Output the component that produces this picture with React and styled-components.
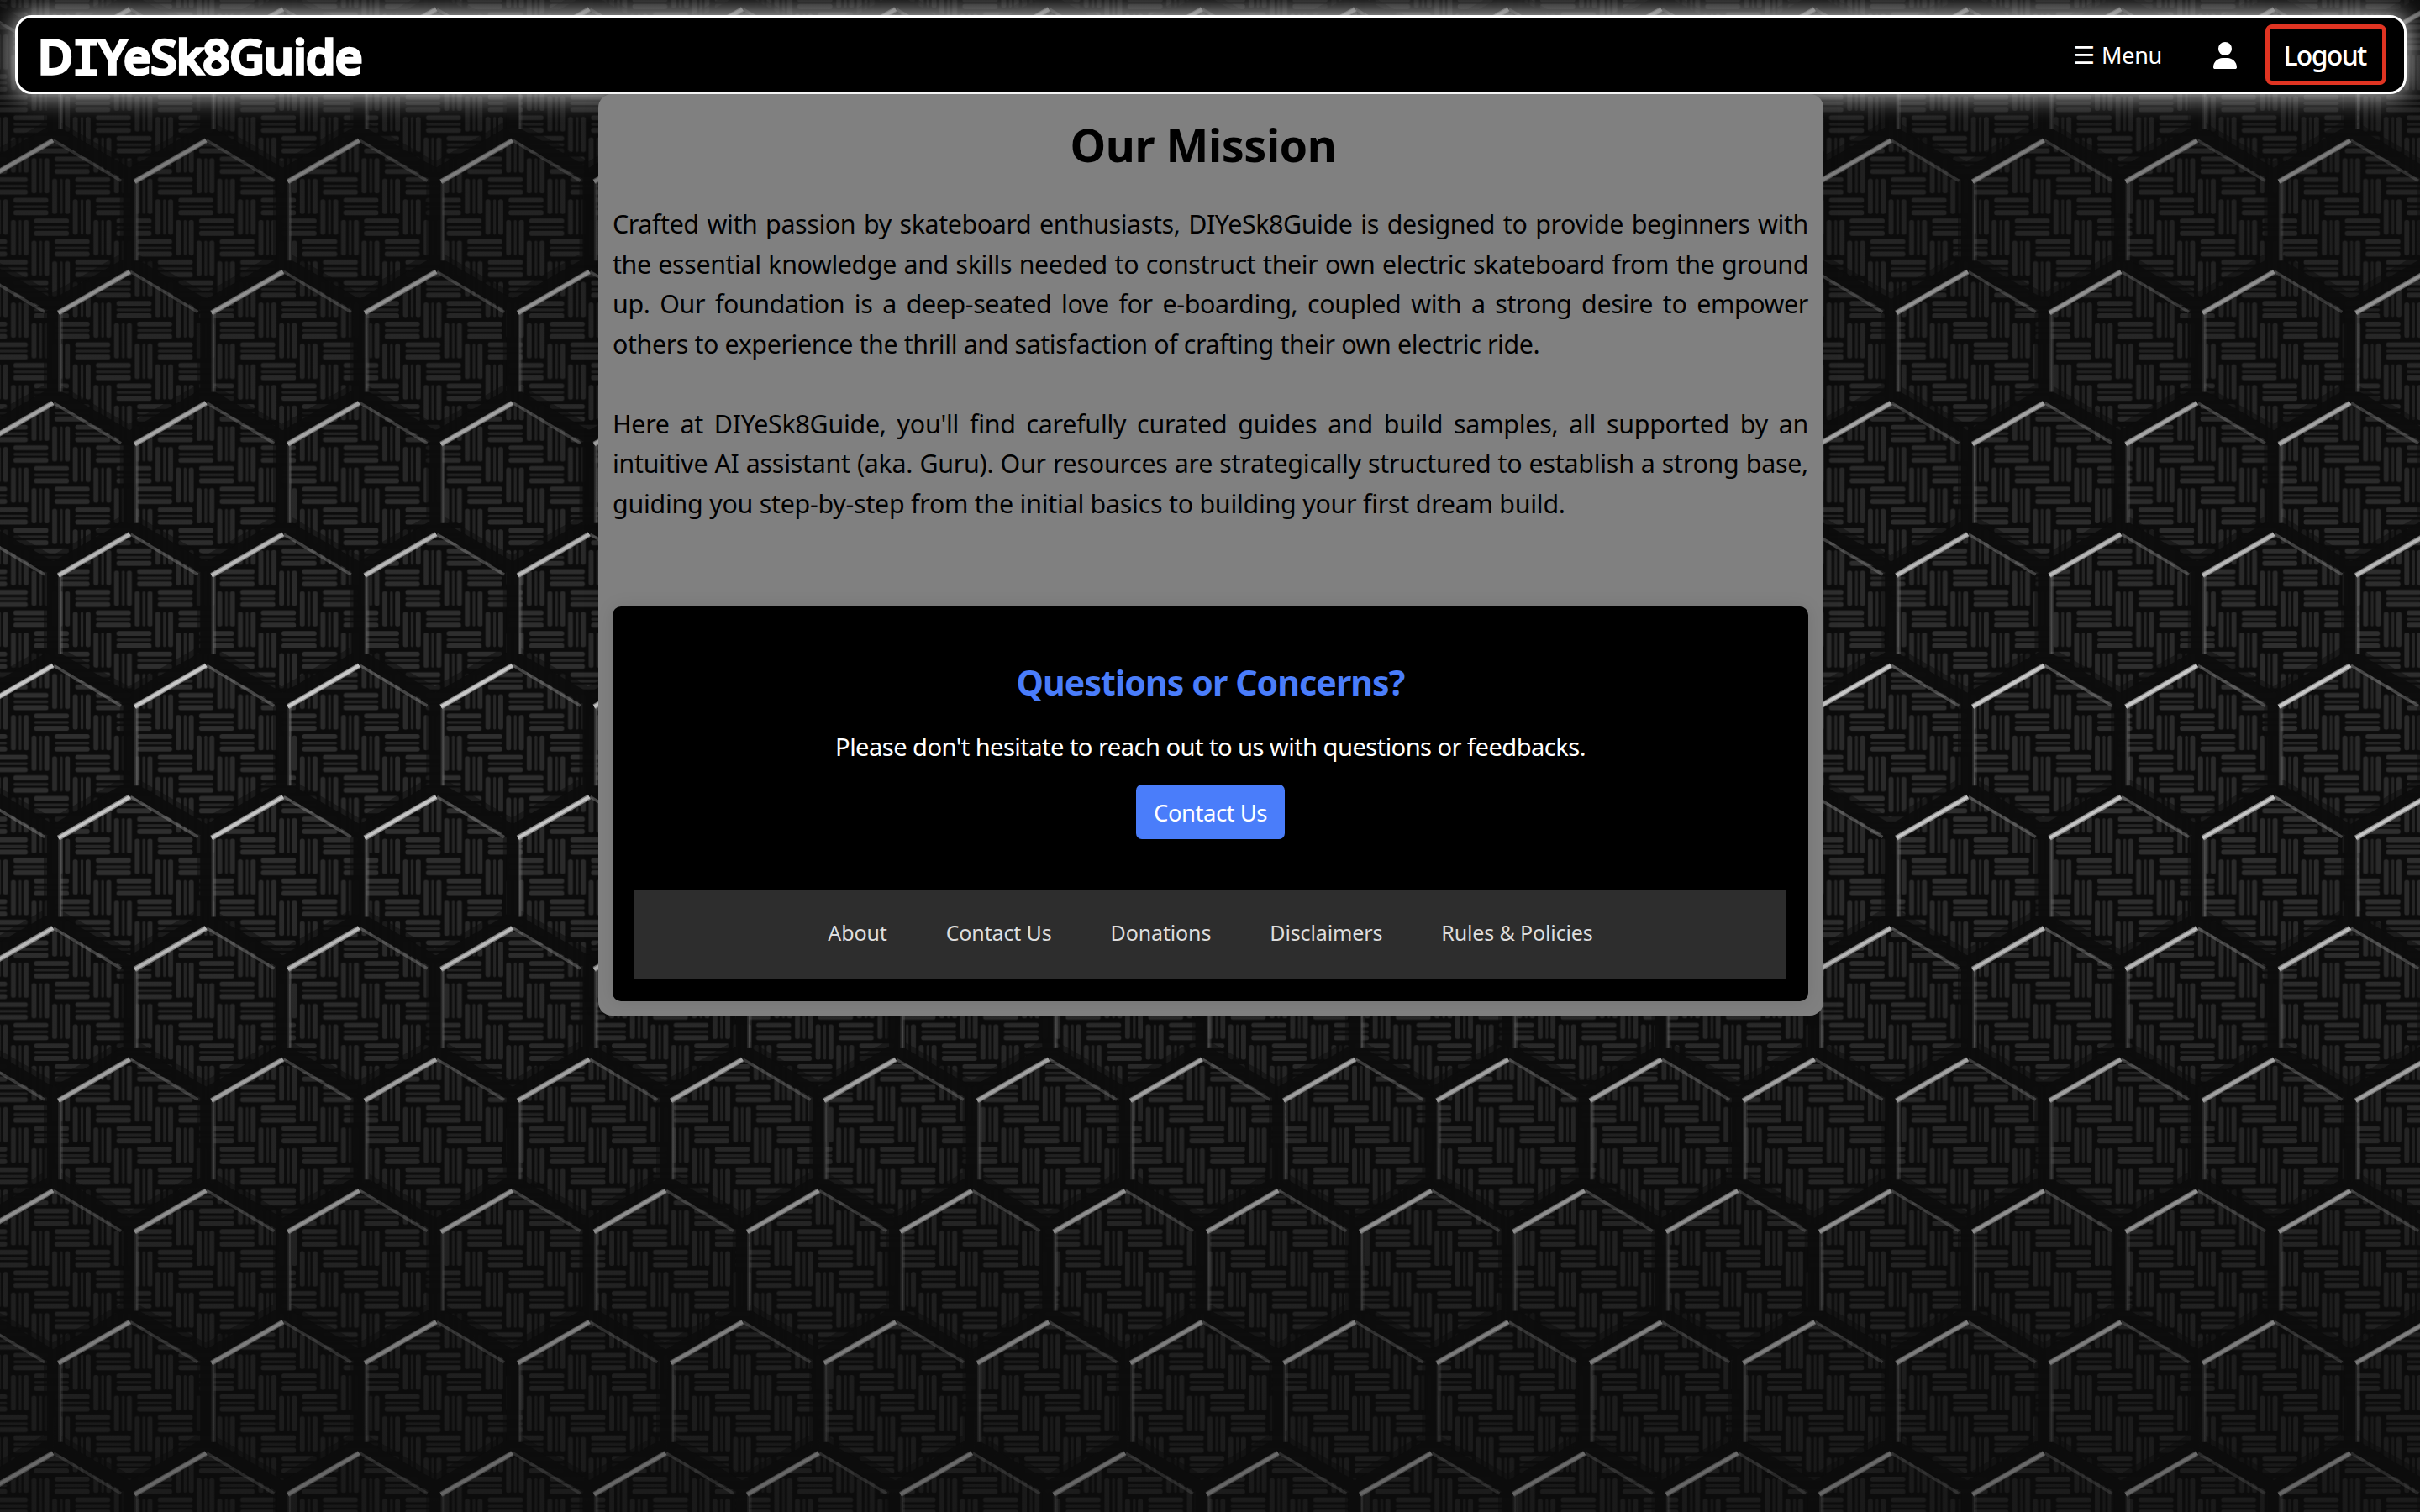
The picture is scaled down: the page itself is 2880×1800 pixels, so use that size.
import React from 'react';
import styled, { createGlobalStyle } from 'styled-components';
import { FaUser } from 'react-icons/fa6';

const uiFont = '"Noto Sans", "Open Sans", sans-serif';

const GlobalStyle = createGlobalStyle`
  *, *::before, *::after { box-sizing: border-box; }
  body { margin: 0; background: #0c0c0c; font-family: ${uiFont}; }
`;

const Page = styled.div`
  min-height: 1800px;
  padding-top: 18px;
  overflow: hidden;
  isolation: isolate;
  position: relative;
`;

const Backdrop = styled.svg`
  position: absolute;
  inset: 0;
  z-index: -1;
  display: block;
`;

const Header = styled.header`
  display: flex;
  align-items: center;
  justify-content: space-between;
  height: 94px;
  margin: 0 16px 0 18px;
  padding: 0 21px 0 24px;
  background: #000;
  border: 3px solid #fff;
  border-radius: 20px;
  box-shadow: 0 0 30px rgba(255, 255, 255, 0.85);
  color: #fff;
`;

const Logo = styled.a`
  padding-top: 4px;
  font-size: 57px;
  font-weight: 500;
  line-height: 70px;
  letter-spacing: -0.6px;
  -webkit-text-stroke: 3.6px #fff;
  stroke-linejoin: round;
`;

const SerifCap = styled.span`
  font-family: "DejaVu Sans Mono", monospace;
  font-size: 55px;
  letter-spacing: -2px;
`;

const Nav = styled.nav`
  display: flex;
  align-items: center;
`;

const MenuButton = styled.a`
  display: flex;
  align-items: center;
  gap: 8px;
  margin-right: 59px;
  padding-top: 2px;
  font-size: 27px;
  line-height: 36px;
  letter-spacing: -0.3px;
`;

const MenuGlyph = styled.span`
  font-family: "DejaVu Sans", sans-serif;
  font-size: 29px;
  line-height: 36px;
`;

const UserIcon = styled(FaUser)`
  display: block;
  width: 32px;
  height: 32px;
  margin: 2px 32px 0 0;
`;

const LogoutButton = styled.button`
  width: 144px;
  height: 72px;
  padding: 2px 3px 0 0;
  background: #000;
  border: 5px solid #e03422;
  border-radius: 8px;
  color: #fff;
  font: 500 32px/44px ${uiFont};
  letter-spacing: -1.7px;
`;

const Card = styled.main`
  width: 1458px;
  height: 1097px;
  margin-left: 712px;
  padding: 28px 18px 17px 17px;
  background: #808080;
  border-radius: 16px;
  box-shadow: 0 0 20px rgba(0, 0, 0, 0.1);
  color: #000;
`;

const Title = styled.h1`
  margin: 0 17px 39px 0;
  font-size: 54px;
  font-weight: 700;
  line-height: 64px;
  letter-spacing: -0.5px;
  text-align: center;
`;

const Copy = styled.p`
  margin: 0 0 47.5px;
  font-size: 30.4px;
  line-height: 47.5px;
  letter-spacing: ${({ $tracking }) => $tracking};
  text-align: justify;
`;

const Contact = styled.section`
  display: flex;
  flex-direction: column;
  align-items: center;
  height: 470px;
  margin-top: 99px;
  padding: 62px 26px 26px;
  background: #000;
  border-radius: 10px;
  box-shadow: 0 0 20px rgba(0, 0, 0, 0.1);
`;

const ContactTitle = styled.h2`
  margin: 0 0 25px;
  color: #4a7dfa;
  font-size: 41px;
  font-weight: 700;
  line-height: 57px;
  letter-spacing: -0.9px;
`;

const ContactText = styled.p`
  margin: 0 0 22px;
  color: #fff;
  font-size: 29.2px;
  line-height: 46px;
  letter-spacing: -0.58px;
`;

const ContactButton = styled.a`
  width: 177px;
  height: 65px;
  background: #4a7dfa;
  border-radius: 7px;
  color: #fff;
  font-size: 27.5px;
  line-height: 67px;
  letter-spacing: -0.5px;
  text-align: center;
`;

const Footer = styled.footer`
  display: flex;
  align-items: center;
  justify-content: center;
  gap: 70px;
  width: 100%;
  height: 107px;
  margin-top: auto;
  padding-bottom: 5px;
  background: #2d2d2d;
`;

const FooterLink = styled.a`
  color: #ddd;
  font-size: 25px;
  line-height: 36px;
  letter-spacing: -0.13px;
`;

/* Carbon weave: each step shifts one unit right and one unit down. */
const UNIT = 24.555;
const TILE = UNIT * 4;

function WeaveTile() {
  const bars = [];
  const wrap = [-TILE, 0, TILE];
  for (let i = 0; i < 4; i += 1) {
    wrap.forEach((dx) => wrap.forEach((dy) => {
      const hx = i * UNIT + 3.8 + dx;
      const hy = i * UNIT + 1.9 + dy;
      const vx = (i + 3) * UNIT + 0.9 + dx;
      const vy = i * UNIT + 3.6 + dy;
      const key = `${i}:${dx}:${dy}`;
      bars.push(
        <g key={key}>
          <rect x={hx} y={hy} width="41.5" height="5.8" rx="2.5" />
          <rect x={hx} y={hy + 8.9} width="41.5" height="3.4" rx="1.7" fillOpacity="0.8" />
          <rect x={hx} y={hy + 14.8} width="41.5" height="5.8" rx="2.5" />
          <rect x={vx} y={vy} width="5.8" height="42" rx="2.5" fillOpacity="0.9" />
          <rect x={vx + 9.2} y={vy} width="3.2" height="42" rx="1.6" fillOpacity="0.75" />
          <rect x={vx + 15.2} y={vy} width="5.8" height="42" rx="2.5" fillOpacity="0.9" />
        </g>,
      );
    }));
  }
  return bars;
}

/* Honeycomb: row 0 peaks at y = 10, odd rows shift by half a cell. */
const CELL = 182.27;
const ROW = 156.27;
const peaks = [];
for (let r = -1; r < 12; r += 1) {
  for (let c = -1; c < 17; c += 1) {
    peaks.push([(r % 2 === 0 ? 154.5 : 63) + c * CELL, 10 + r * ROW]);
  }
}
const groove = peaks.map(([x, y]) => `M${x - 91} ${y + 145}V${y + 42}L${x} ${y - 10}L${x + 91} ${y + 42}`).join('');
const brightEdge = peaks.map(([x, y]) => `M${x - 85} ${y + 50}L${x} ${y + 1}`).join('');
const dimEdge = peaks.map(([x, y]) => `M${x + 1} ${y + 1}L${x + 81} ${y + 49}`).join('');
const sideEdge = peaks.map(([x, y]) => `M${x - 82.5} ${y + 50}V${y + 144}`).join('');

function HoneycombBackdrop() {
  return (
    <Backdrop width="2880" height="1800" viewBox="0 0 2880 1800" aria-hidden="true">
      <defs>
        <pattern id="weave" x="159.5" y="577.4" width={TILE} height={TILE} patternUnits="userSpaceOnUse">
          <g fill="#2e2e2e"><WeaveTile /></g>
        </pattern>
        <linearGradient id="falloff" gradientUnits="userSpaceOnUse" x1="0" y1="0" x2="0" y2="1800">
          <stop offset="0" stopColor="#0c0c0c" stopOpacity="0.42" />
          <stop offset="0.15" stopColor="#0c0c0c" stopOpacity="0.3" />
          <stop offset="0.4" stopColor="#0c0c0c" stopOpacity="0" />
          <stop offset="0.6" stopColor="#0c0c0c" stopOpacity="0" />
          <stop offset="1" stopColor="#0c0c0c" stopOpacity="0.55" />
        </linearGradient>
        <linearGradient id="shine" gradientUnits="userSpaceOnUse" x1="0" y1="0" x2="0" y2="1800">
          <stop offset="0.02" stopColor="#6a6a6a" />
          <stop offset="0.1" stopColor="#7a7a7a" />
          <stop offset="0.28" stopColor="#a4a4a4" />
          <stop offset="0.45" stopColor="#c8c8c8" />
          <stop offset="0.58" stopColor="#c4c4c4" />
          <stop offset="0.7" stopColor="#a4a4a4" />
          <stop offset="0.87" stopColor="#828282" />
          <stop offset="1" stopColor="#626262" />
        </linearGradient>
      </defs>
      <rect width="2880" height="1800" fill="#0c0c0c" />
      <rect width="2880" height="1800" fill="url(#weave)" />
      <rect width="2880" height="1800" fill="url(#falloff)" />
      <g fill="none" strokeLinejoin="round">
        <path d={groove} stroke="#0c0c0c" strokeOpacity="0.5" strokeWidth="21" transform="translate(-1 -4)" />
        <path d={groove} stroke="#0c0c0c" strokeOpacity="0.9" strokeWidth="15" />
        <path d={sideEdge} stroke="url(#shine)" strokeOpacity="0.17" strokeWidth="5.5" />
        <path d={sideEdge} stroke="url(#shine)" strokeOpacity="0.2" strokeWidth="2" />
        <path d={dimEdge} stroke="url(#shine)" strokeOpacity="0.3" strokeWidth="3.5" />
        <path d={brightEdge} stroke="url(#shine)" strokeOpacity="0.6" strokeWidth="6.4" />
        <path d={brightEdge} stroke="url(#shine)" strokeWidth="4" />
      </g>
    </Backdrop>
  );
}

const footerLinks = ['About', 'Contact Us', 'Donations', 'Disclaimers', 'Rules & Policies'];

export default function App() {
  return (
    <>
      <GlobalStyle />
      <Page>
        <HoneycombBackdrop />
        <Header>
          <Logo>D<SerifCap>I</SerifCap>YeSk8Guide</Logo>
          <Nav>
            <MenuButton><MenuGlyph>☰</MenuGlyph>Menu</MenuButton>
            <UserIcon />
            <LogoutButton>Logout</LogoutButton>
          </Nav>
        </Header>
        <Card>
          <Title>Our Mission</Title>
          <Copy $tracking="-0.4px">
            Crafted with passion by skateboard enthusiasts, DIYeSk8Guide is designed to provide
            beginners with the essential knowledge and skills needed to construct their own electric
            skateboard from the ground up. Our foundation is a deep-seated love for e-boarding,
            coupled with a strong desire to empower others to experience the thrill and satisfaction
            of crafting their own electric ride.
          </Copy>
          <Copy $tracking="-0.26px">
            Here at DIYeSk8Guide, you'll find carefully curated guides and build samples, all
            supported by an intuitive AI assistant (aka. Guru). Our resources are strategically
            structured to establish a strong base, guiding you step-by-step from the initial basics
            to building your first dream build.
          </Copy>
          <Contact>
            <ContactTitle>Questions or Concerns?</ContactTitle>
            <ContactText>Please don't hesitate to reach out to us with questions or feedbacks.</ContactText>
            <ContactButton>Contact Us</ContactButton>
            <Footer>
              {footerLinks.map((label) => <FooterLink key={label}>{label}</FooterLink>)}
            </Footer>
          </Contact>
        </Card>
      </Page>
    </>
  );
}
